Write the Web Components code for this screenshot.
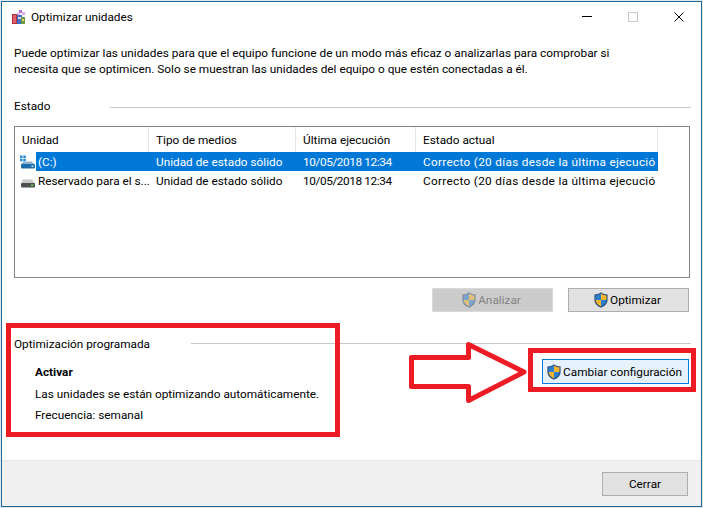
<!DOCTYPE html>
<html>
<head>
<meta charset="utf-8" />
<title>Optimizar unidades</title>
<style>
    html, body { margin: 0; padding: 0; background: #fff; }
    body { font: 11.8px/16px Roboto, "Open Sans", sans-serif; color: #000; }
</style>
</head>
<body>

<template id="shield-tpl">
    <style>:host { display: inline-block; width: 16px; height: 16px; flex: none; }
    svg { display: block; }
    :host([disabled]) svg { opacity: .5; }</style>
    <svg width="14" height="16" viewBox="1 0.500 14 17">
        <path d="M8 .8C6 2.400 3.600 3.200 1 3.200V9c0 3.800 3 6.600 7 8.200 4-1.600 7-4.400 7-8.200V3.200C12.400 3.200 10 2.400 8 .8z" fill="#2a4f7c"/>
        <path d="M8 2.200V9H2.200V4.300C4.300 4.200 6.300 3.400 8 2.200z" fill="#2f7fd0"/>
        <path d="M8 2.200V9h5.800V4.300C11.700 4.200 9.700 3.400 8 2.200z" fill="#f6b62c"/>
        <path d="M2.200 9H8v6.800C4.800 14.400 2.400 12.200 2.200 9z" fill="#f6b62c"/>
        <path d="M13.800 9H8v6.800c3.200-1.400 5.600-3.600 5.800-6.800z" fill="#2f7fd0"/>
    </svg>
</template>

<template id="button-tpl">
    <style>
        :host { display: inline-flex; align-items: center; justify-content: center; box-sizing: border-box; height: 24px; border: 1px solid #adadad; background: #e1e1e1; color: #000; }
        :host([disabled]) { background: #cccccc; border-color: #d9d9d9; color: #838383; }
        :host([focused]) { background: #e5f1fb; border-color: #0078d7; }
    </style>
    <slot></slot>
</template>

<template id="section-tpl">
    <style>
        :host { display: flex; align-items: center; margin-left: 13px; margin-right: 11px; height: 16px; }
        .label { flex: none; width: var(--label-width, 96px); white-space: nowrap; padding-top: var(--label-shift, 0); }
        .rule { flex: 1; height: 1px; background: #c8c8c8; margin-top: var(--rule-shift, 3px); }
    </style>
    <span class="label"><slot></slot></span>
    <span class="rule"></span>
</template>

<template id="title-tpl">
    <style>
        :host { display: flex; align-items: center; height: 32px; padding-left: 10px; flex: none; }
        .name { margin-left: 4px; white-space: nowrap; }
        .spacer { flex: 1; }
        .ctl { width: 46px; height: 32px; display: flex; align-items: center; justify-content: center; }
        .logo { display: block; }
    </style>
    <svg class="logo" width="16" height="16" viewBox="0 0 16 16">
        <rect x="1" y="5" width="6" height="10" fill="#b5303f"/>
        <rect x="2" y="6" width="3" height="8" fill="#e0606c"/>
        <rect x="6" y="6" width="5" height="9" fill="#3f6fc4"/>
        <rect x="7" y="8" width="3" height="2" fill="#d9d9ef"/>
        <rect x="10" y="8" width="4" height="7" fill="#6a9a4a"/>
        <rect x="11" y="10" width="2" height="2" fill="#e8d060"/>
        <rect x="8" y="1" width="3" height="3" fill="#b870d0"/>
        <rect x="11" y="3" width="3" height="3" fill="#d8a8e8"/>
        <rect x="6" y="4" width="3" height="2" fill="#e2b8ec"/>
    </svg>
    <span class="name"><slot></slot></span>
    <span class="spacer"></span>
    <span class="ctl"><svg width="10" height="10"><rect x="0" y="4" width="10" height="1" fill="#000"/></svg></span>
    <span class="ctl"><svg width="10" height="10"><rect x=".5" y=".5" width="9" height="9" fill="none" stroke="#c8c8c8"/></svg></span>
    <span class="ctl"><svg width="10" height="10"><path d="M.5.500l9 9M9.500.500l-9 9" stroke="#000" fill="none"/></svg></span>
</template>

<template id="list-tpl">
    <style>
        :host { display: block; box-sizing: border-box; height: 152px; margin: 0 12px 0 13px; border: 1px solid #828790; background: #fff; overflow: hidden; }
        .head { display: grid; grid-template-columns: 134px 147px 120px 242px; grid-template-rows: 25px; height: 25px; }
        .head span { padding-left: 7px; line-height: 26px; border-right: 1px solid #e5e5e5; white-space: nowrap; }
    </style>
    <div class="head">
        <span>Unidad</span><span>Tipo de medios</span><span>Última ejecución</span><span>Estado actual</span>
    </div>
    <slot></slot>
</template>

<template id="row-tpl">
    <style>
        :host { display: grid; grid-template-columns: 134px 147px 120px 242px; grid-template-rows: 19px; height: 19px; line-height: 21px; white-space: nowrap; }
        .cell { padding-left: 7px; }
        .first { display: flex; padding-left: 4px; }
        .first .txt { padding-left: 2px; flex: 1; }
        .icon { width: 17px; height: 19px; flex: none; display: flex; align-items: center; }
        .date { letter-spacing: -.4px; }
        .state { letter-spacing: .3px; }
        :host([selected]) .txt, :host([selected]) .cell:not(.first) { background: #0078d7; color: #fff; }
    </style>
    <div class="cell first"><span class="icon"><slot name="icon"></slot></span><span class="txt"><slot name="name"></slot></span></div>
    <div class="cell">Unidad de estado sólido</div>
    <div class="cell date">10/05/2018 12:34</div>
    <div class="cell state">Correcto (20 días desde la última ejecució</div>
</template>

<template id="dialog-tpl">
    <style>
        :host { display: block; position: relative; box-sizing: border-box; width: 703px; height: 508px; padding: 1px; background: #fff; overflow: hidden; }
        .frame { display: flex; flex-direction: column; height: 100%; }
        /* window edge and annotations painted over the dialog */
        .edge { position: absolute; inset: 0; box-sizing: border-box; border: 1px solid #e2e5e8; box-shadow: inset 0 0 0 1px #1c6ca3; pointer-events: none; }
        .mark { position: absolute; box-sizing: border-box; border: 5px solid #ed1c24; pointer-events: none; }
        .mark.left { left: 6px; top: 323px; width: 334px; height: 114px; }
        .mark.right { left: 528px; top: 348px; width: 168px; height: 44px; }
        svg.arrow { position: absolute; left: 408px; top: 341px; }
    </style>
    <div class="frame"><slot></slot></div>
    <div class="edge"></div>
    <div class="mark left"></div>
    <svg class="arrow" width="122" height="66" viewBox="0 0 122 66">
        <path d="M3.500 16.500H60.500V3.500L116 31 60.500 59.500V45.500H3.500z" fill="#fff" stroke="#ed1c24" stroke-width="5" stroke-linejoin="round"/>
    </svg>
    <div class="mark right"></div>
</template>

<win-dialog>
    <title-bar>Optimizar unidades</title-bar>
    <div style="margin:12px 12px 0 13px;height:32px;white-space:nowrap">Puede optimizar las unidades para que el equipo funcione de un modo más eficaz o analizarlas para comprobar si<br>necesita que se optimicen. Solo se muestran las unidades del equipo o que estén conectadas a él.</div>
    <section-head style="margin-top:21px">Estado</section-head>
    <drive-list style="margin-top:12px">
        <drive-row selected>
            <svg slot="icon" width="16" height="16" viewBox="0 0 16 16">
                <path d="M1 1.500h2.500V4H1zM4.300 1.500h2.500V4H4.300zM1 4.800h2.500v2.500H1zM4.300 4.800h2.500v2.500H4.300z" fill="#1e8ae0"/>
                <path d="M4 7.500h9l2.500 3H2z" fill="#8fb4d0"/>
                <rect x="2" y="10" width="14" height="4.500" rx="1" fill="#1d6ea8"/>
                <rect x="12.500" y="11.500" width="2" height="1.500" fill="#bfe0f5"/>
            </svg>
            <span slot="name">(C:)</span>
        </drive-row>
        <drive-row>
            <svg slot="icon" width="16" height="16" viewBox="0 0 16 16">
                <path d="M4 6.500h9l2.500 3.500H2z" fill="#c8c8c8"/>
                <rect x="2" y="10" width="14" height="4.500" rx="1" fill="#4e4e4e"/>
                <rect x="12" y="11.500" width="2.500" height="1.500" fill="#6fd06f"/>
            </svg>
            <span slot="name">Reservado para el s...</span>
        </drive-row>
    </drive-list>
    <div style="display:flex;justify-content:flex-end;gap:15px;margin:10px 13px 0 0">
        <win-button disabled style="width:121px;padding-right:2px"><shield-icon disabled></shield-icon>Analizar</win-button>
        <win-button style="width:121px;padding-right:2px"><shield-icon></shield-icon>Optimizar</win-button>
    </div>
    <section-head style="margin-top:23px;--label-width:177px;--label-shift:2px;--rule-shift:1px">Optimización programada</section-head>
    <div style="flex:1;display:flex;justify-content:space-between;margin:0 13px 0 34px">
        <div style="padding-top:13px">
            <div style="height:16px;font-weight:700">Activar</div>
            <div style="height:16px;margin-top:6px">Las unidades se están optimizando automáticamente.</div>
            <div style="height:16px;margin-top:5px">Frecuencia: semanal</div>
        </div>
        <win-button focused style="width:147px;height:25px;margin-top:8px;padding-right:2px;white-space:nowrap"><shield-icon></shield-icon>Cambiar configuración</win-button>
    </div>
    <div style="flex:none;height:47px;box-sizing:border-box;background:#f0f0f0;border-top:1px solid #e8e8e8;display:flex;justify-content:flex-end;align-items:flex-start;padding:11px 14px 0 0">
        <win-button style="width:86px">Cerrar</win-button>
    </div>
</win-dialog>

<script>
function component(name, tplId) {
    customElements.define(name, class extends HTMLElement {
        constructor () {
            super();
            this.attachShadow({mode: 'open'});
            this.shadowRoot.appendChild(document.getElementById(tplId).content.cloneNode(true));
        }
    });
}
component('shield-icon', 'shield-tpl');
component('win-button', 'button-tpl');
component('section-head', 'section-tpl');
component('title-bar', 'title-tpl');
component('drive-list', 'list-tpl');
component('drive-row', 'row-tpl');
component('win-dialog', 'dialog-tpl');
</script>
</body>
</html>
